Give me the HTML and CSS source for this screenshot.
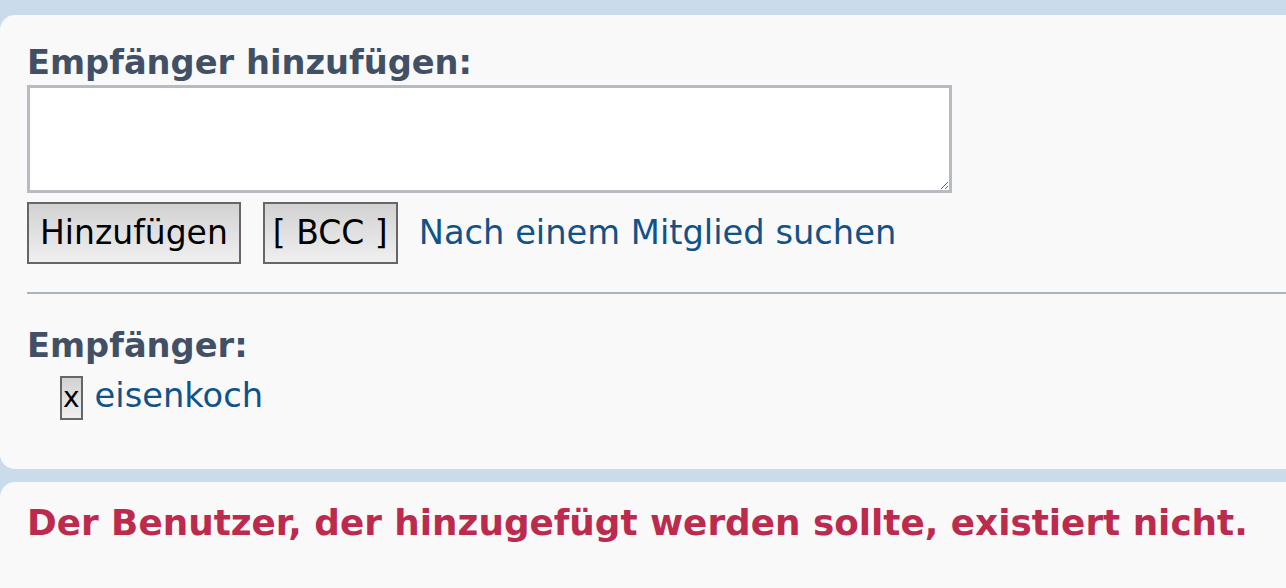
FILE: index.html
```html
<!DOCTYPE html>
<html lang="de">
<head>
<meta charset="utf-8">
<title>Empfänger</title>
<link rel="stylesheet" href="styles.css">
</head>
<body>
<div class="page">
  <section class="panel panel-form">
    <h3 class="label">Empfänger hinzufügen:</h3>
    <textarea class="recipients-input"></textarea>
    <div class="actions">
      <button class="btn" type="button">Hinzufügen</button>
      <button class="btn btn-narrow" type="button">[ BCC ]</button>
      <a class="link" href="#">Nach einem Mitglied suchen</a>
    </div>
    <hr class="divider">
    <h3 class="label label-recipients">Empfänger:</h3>
    <div class="recipient">
      <button class="btn-remove" type="button">x</button>
      <a class="link recipient-name" href="#">eisenkoch</a>
    </div>
  </section>
  <section class="panel panel-error">
    <p class="error">Der Benutzer, der hinzugefügt werden sollte, existiert nicht.</p>
  </section>
</div>
</body>
</html>
```
FILE: styles.css
```css
html, body {
  margin: 0;
  padding: 0;
}
body {
  background: #cadceb;
  font-family: "DejaVu Sans", Verdana, sans-serif;
  overflow: hidden;
}
.page {
  padding-top: 15px;
  display: flex;
  flex-direction: column;
  gap: 13px;
}
.panel {
  background: #f9f9f9;
  border-radius: 15px 0 0 15px;
  padding-left: 27px;
}
.panel-form {
  padding-top: 29px;
  padding-bottom: 49px;
}
.label {
  margin: 0;
  font-size: 33.7px;
  line-height: 38px;
  font-weight: bold;
  color: #425066;
}
.recipients-input {
  display: block;
  box-sizing: border-box;
  width: 925px;
  height: 108px;
  margin: 3px 0 0;
  border: 3px solid #b6bcc2;
  background: #fff;
  padding: 4px;
  font-family: inherit;
  font-size: 20px;
}
.actions {
  display: flex;
  align-items: center;
  margin-top: 9px;
}
.btn {
  font-family: "DejaVu Sans", Verdana, sans-serif;
  font-size: 33px;
  line-height: 38px;
  padding: 10px 11px;
  color: #000;
  border: 2px solid #666;
  border-radius: 0;
  background: linear-gradient(#d2d2d2, #efefef);
  margin-right: 22px;
}
.btn-narrow {
  padding-left: 8px;
  padding-right: 8px;
  margin-right: 21px;
}
.link {
  color: #105289;
  text-decoration: none;
  font-size: 33.7px;
  line-height: 38px;
}
.divider {
  margin: 28px 0 0;
  border: 0;
  border-top: 2px solid #a9b3bd;
  height: 0;
}
.label-recipients {
  margin-top: 33px;
}
.recipient {
  display: flex;
  align-items: baseline;
  padding-left: 33px;
  margin-top: 11px;
}
.btn-remove {
  font-family: "DejaVu Sans", Verdana, sans-serif;
  font-size: 28px;
  line-height: 40px;
  padding: 0 1px;
  color: #000;
  border: 2px solid #666;
  border-radius: 0;
  background: linear-gradient(#d2d2d2, #efefef);
}
.recipient-name {
  margin-left: 12px;
}
.panel-error {
  padding-top: 20px;
  min-height: 120px;
}
.error {
  margin: 0;
  font-size: 35.8px;
  line-height: 41px;
  font-weight: bold;
  color: #bc2a4d;
}
```
